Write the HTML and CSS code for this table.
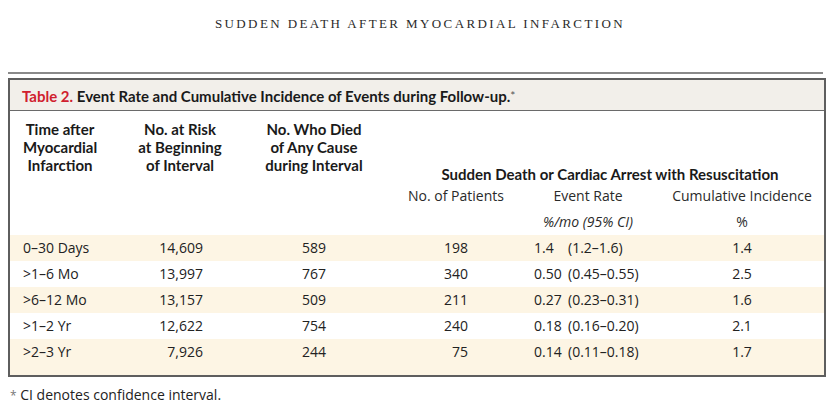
FILE: index.html
```html
<!DOCTYPE html>
<html>
<head>
<meta charset="utf-8">
<link rel="stylesheet" href="styles.css">
</head>
<body>
<div class="running-head">Sudden Death after Myocardial Infarction</div>
<div class="top-rule"></div>
<div class="table-box">
  <div class="title-bar"><span class="label">Table 2.</span> Event Rate and Cumulative Incidence of Events during Follow-up.<span class="star">*</span></div>
  <table class="data">
    <colgroup>
      <col class="c1"><col class="c2"><col class="c3"><col class="c4"><col class="c5"><col class="c6">
    </colgroup>
    <thead>
      <tr class="ha">
        <th rowspan="3" class="h-main h1">Time after<br>Myocardial<br>Infarction</th>
        <th rowspan="3" class="h-main">No. at Risk<br>at Beginning<br>of Interval</th>
        <th rowspan="3" class="h-main">No. Who Died<br>of Any Cause<br>during Interval</th>
        <th colspan="3" class="h-span">Sudden Death or Cardiac Arrest with Resuscitation</th>
      </tr>
      <tr class="hb">
        <th class="h-sub">No. of Patients</th>
        <th class="h-sub h-rate">Event Rate</th>
        <th class="h-sub">Cumulative Incidence</th>
      </tr>
      <tr class="hc">
        <th class="h-sub"></th>
        <th class="h-sub h-rate"><i>%/mo (95% CI)</i></th>
        <th class="h-sub">%</th>
      </tr>
    </thead>
    <tbody>
      <tr class="stripe">
        <td class="t1">0–30 Days</td><td class="t2">14,609</td><td class="t3">589</td><td class="t4">198</td>
        <td class="t5"><span class="est">1.4</span>(1.2–1.6)</td><td class="t6">1.4</td>
      </tr>
      <tr>
        <td class="t1">&gt;1–6 Mo</td><td class="t2">13,997</td><td class="t3">767</td><td class="t4">340</td>
        <td class="t5"><span class="est">0.50</span>(0.45–0.55)</td><td class="t6">2.5</td>
      </tr>
      <tr class="stripe">
        <td class="t1">&gt;6–12 Mo</td><td class="t2">13,157</td><td class="t3">509</td><td class="t4">211</td>
        <td class="t5"><span class="est">0.27</span>(0.23–0.31)</td><td class="t6">1.6</td>
      </tr>
      <tr>
        <td class="t1">&gt;1–2 Yr</td><td class="t2">12,622</td><td class="t3">754</td><td class="t4">240</td>
        <td class="t5"><span class="est">0.18</span>(0.16–0.20)</td><td class="t6">2.1</td>
      </tr>
      <tr class="stripe">
        <td class="t1">&gt;2–3 Yr</td><td class="t2">7,926</td><td class="t3">244</td><td class="t4">75</td>
        <td class="t5"><span class="est">0.14</span>(0.11–0.18)</td><td class="t6">1.7</td>
      </tr>
      <tr class="stripe spacer"><td colspan="6"></td></tr>
    </tbody>
  </table>
</div>
<div class="footnote"><span class="fstar">*</span> CI denotes confidence interval.</div>
</body>
</html>
```
FILE: styles.css
```css
html, body {
  margin: 0;
  padding: 0;
  background: #ffffff;
}
body {
  width: 840px;
  font-family: "Open Sans", "Liberation Sans", sans-serif;
  color: #222;
}
.running-head {
  padding-top: 16px;
  height: 16px;
  line-height: 16px;
  text-align: center;
  font-family: "Liberation Serif", serif;
  font-size: 13px;
  text-transform: uppercase;
  letter-spacing: 2.4px;
  color: #2a2a2a;
}
.top-rule {
  margin: 40px 17px 0 8px;
  height: 2px;
  background: #8a8a8a;
}
.table-box {
  margin: 4px 14px 0 8px;
  border: 2px solid #5e5e5e;
  background: #fff;
}
.title-bar {
  height: 30px;
  line-height: 31px;
  background: #f2efea;
  border-bottom: 1px solid #6a6a6a;
  padding-left: 12px;
  font-family: "Lato", "Open Sans", sans-serif;
  font-weight: 700;
  font-size: 15px;
  color: #1a1a1a;
}
.title-bar .label { color: #d0202e; }
.title-bar .star { font-weight: 400; color: #555; font-size: 12px; vertical-align: 2px; }
.data {
  border-collapse: collapse;
  border-spacing: 0;
  width: 814px;
  table-layout: fixed;
  font-size: 14px;
}
:where(.data) th, :where(.data) td { padding: 0; white-space: nowrap; }
.c1 { width: 100px; }
.c2 { width: 140px; }
.c3 { width: 128px; }
.c4 { width: 156px; }
.c5 { width: 126px; }
.c6 { width: 164px; }
.h-main {
  vertical-align: top;
  text-align: center;
  padding-top: 9px;
  line-height: 18px;
  font-family: "Lato", "Open Sans", sans-serif;
  font-weight: 700;
  font-size: 15px;
  color: #1a1a1a;
}
.h1 { padding-left: 13px; padding-right: 13px; }
.h-span {
  height: 72px;
  vertical-align: bottom;
  text-align: center;
  padding-left: 18px;
  line-height: 18px;
  font-family: "Lato", "Open Sans", sans-serif;
  font-weight: 700;
  font-size: 15px;
  color: #1a1a1a;
}
.h-sub {
  height: 26px;
  line-height: 26px;
  text-align: center;
  font-weight: 400;
  color: #2a2a2a;
}
.h-rate { padding-right: 18px; }
.data tbody td { height: 26px; line-height: 26px; color: #222; }
.stripe td { background: #fdf5e4; }
.t1 { padding-left: 13px; text-align: left; }
.t2 { text-align: right; padding-right: 47px; }
.t3 { text-align: right; padding-right: 52px; }
.t4 { text-align: right; padding-right: 66px; }
.t5 { text-align: left; }
.t6 { text-align: center; }
.est { display: inline-block; width: 34px; }
.data tbody .spacer td { height: 10px; line-height: 10px; }
.footnote {
  margin-top: 9px;
  padding-left: 10px;
  line-height: 18px;
  font-size: 14px;
  color: #222;
}
.fstar { color: #777; font-size: 12px; }
```
